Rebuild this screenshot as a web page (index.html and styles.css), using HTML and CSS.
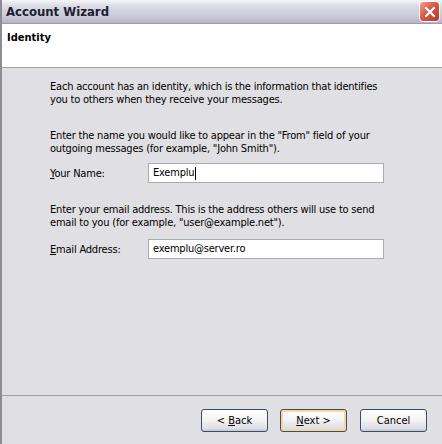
FILE: index.html
```html
<!DOCTYPE html>
<html lang="en">

<head>
  <meta charset="UTF-8" />
  <title>Account Wizard</title>
  <link rel="stylesheet" href="styles.css">
</head>

<body>
  <div class="wizard">
    <div class="title-bar">
      <span class="title">Account Wizard</span>
      <div class="close-btn">
        <svg width="12" height="12" viewBox="0 0 12 12">
          <path d="M2 2 L10 10 M10 2 L2 10" stroke="#fff" stroke-width="2.2" stroke-linecap="round" />
        </svg>
      </div>
    </div>

    <div class="page-header">
      <h2>Identity</h2>
    </div>

    <div class="page-body">
      <p class="intro">Each account has an identity, which is the information that identifies you to others when they receive your messages.</p>

      <p class="hint">Enter the name you would like to appear in the "From" field of your outgoing messages (for example, "John Smith").</p>
      <div class="field-row">
        <label><u>Y</u>our Name:</label>
        <div class="field">Exemplu<span class="caret"></span></div>
      </div>

      <p class="hint email-hint">Enter your email address. This is the address others will use to send email to you (for example, "user@example.net").</p>
      <div class="field-row">
        <label><u>E</u>mail Address:</label>
        <div class="field">exemplu@server.ro</div>
      </div>
    </div>

    <div class="button-bar">
      <button>&lt; <u>B</u>ack</button>
      <button class="default"><u>N</u>ext &gt;</button>
      <button class="cancel">Cancel</button>
    </div>
  </div>
</body>

</html>
```

FILE: styles.css
```css
body {
  margin: 0;
  background-color: #e0dfe3;
  font-family: "DejaVu Sans Condensed", "DejaVu Sans", sans-serif;
  font-size: 11px;
  color: #000;
}

.wizard {
  width: 442px;
  height: 444px;
  overflow: hidden;
  display: flex;
  flex-direction: column;
  border-left: 2px solid #8c8c94;
  box-sizing: border-box;
  background-color: #e0dfe3;
}

.title-bar {
  height: 24px;
  display: flex;
  align-items: center;
  justify-content: space-between;
  padding: 0 2px 0 4px;
  background: linear-gradient(#f6f6fa, #dcdce6 25%, #cacada 70%, #b4b4c4);
  border-bottom: 1px solid #9c9cac;
  box-sizing: border-box;
}

.title {
  font-family: "DejaVu Sans Condensed", "DejaVu Sans", sans-serif;
  font-weight: bold;
  font-size: 13px;
  color: #202030;
}

.close-btn {
  width: 21px;
  height: 21px;
  border-radius: 4px;
  border: 1px solid #fff;
  background: linear-gradient(135deg, #f0a090, #d85a48 45%, #b83828);
  display: flex;
  align-items: center;
  justify-content: center;
  box-sizing: border-box;
}

.page-header {
  height: 44px;
  background-color: #fff;
  border-bottom: 1px solid #a0a0a0;
  padding: 7px 0 0 5px;
  box-sizing: border-box;
}

.page-header h2 {
  margin: 0;
  font-size: 11px;
  font-weight: bold;
}

.page-body {
  flex: 1;
  padding: 12px 50px 0 48px;
  line-height: 13px;
  letter-spacing: -0.2px;
}

.page-body p {
  margin: 0;
}

.intro {
  margin-bottom: 23px !important;
}

.hint {
  margin-bottom: 8px !important;
}

.email-hint {
  margin-top: 20px !important;
  margin-bottom: 10px !important;
}

.field-row {
  display: flex;
  align-items: center;
}

.field-row label {
  width: 98px;
}

.field {
  width: 236px;
  height: 20px;
  background-color: #fff;
  border: 1px solid #a5acb2;
  box-sizing: border-box;
  padding: 0 4px;
  line-height: 18px;
  display: flex;
  align-items: center;
}

.caret {
  display: inline-block;
  width: 1px;
  height: 13px;
  background-color: #000;
  margin-left: 1px;
}

.button-bar {
  height: 49px;
  border-top: 1px solid #a0a0a0;
  display: flex;
  justify-content: flex-end;
  align-items: flex-start;
  gap: 12px;
  padding: 13px 15px 0 0;
  box-sizing: border-box;
}

.button-bar button {
  width: 67px;
  height: 23px;
  font-family: "DejaVu Sans Condensed", "DejaVu Sans", sans-serif;
  font-size: 11px;
  color: #000;
  border: 1px solid #3c4c6c;
  border-radius: 3px;
  background: linear-gradient(#ffffff, #f2f2f2 50%, #dcdce4 90%, #c4c4cc);
  padding: 0;
}

.button-bar button.default {
  box-shadow: inset 0 0 0 2px #f8d898;
}

.button-bar button.cancel {
  margin-left: 1px;
}
```
